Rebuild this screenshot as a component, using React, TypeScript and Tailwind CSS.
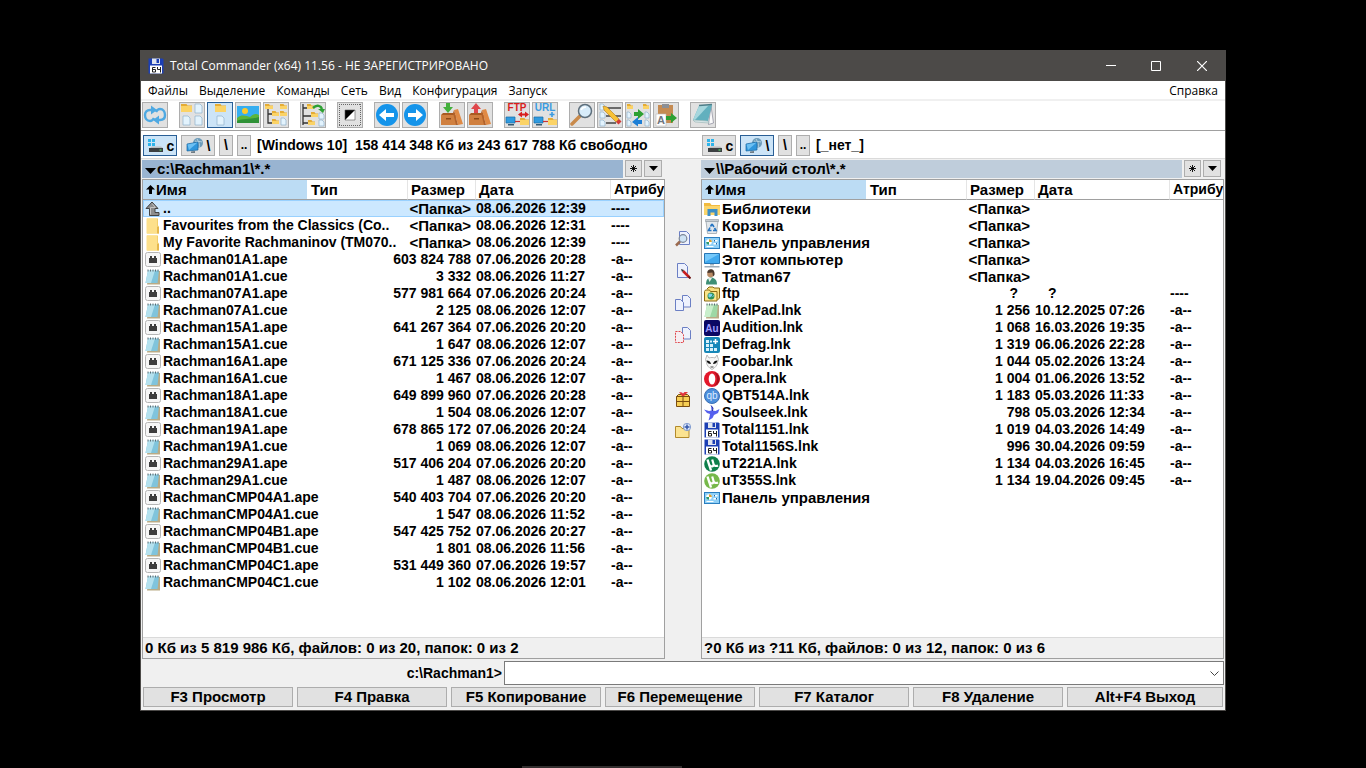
import { ReactNode } from "react";

type SvgProps = {
	children: ReactNode;
	box?: string;
	className?: string;
};

const Svg = ({ children, box = "0 0 16 16", className = "size-4" }: SvgProps) => (
	<svg viewBox={box} className={`block shrink-0 ${className}`} fill="none" aria-hidden="true">
		{children}
	</svg>
);

/* ---------- shared glyph pieces ---------- */

const Fold = ({ x, y, w = 9, h = 7 }: { x: number; y: number; w?: number; h?: number }) => (
	<g>
		<path d={`M${x} ${y}h${w / 2}l1 1.5h${w / 2 - 1}v${h - 1.5}h${-w}z`} fill="#e5ac35" />
		<path d={`M${x} ${y + 2}h${w}v${h - 2}h${-w}z`} fill="#fbd366" />
	</g>
);

const Sheet = ({ x, y, w = 7, h = 9 }: { x: number; y: number; w?: number; h?: number }) => (
	<path
		d={`M${x} ${y}h${w - 2}l2 2v${h - 2}h${-w}z`}
		fill="#e3f3fd"
		stroke="#8fb2cc"
		strokeWidth="0.7"
	/>
);

const Floppy = () => (
	<Svg>
		<path d="M0.500 0.500h14l1 1v14h-15z" fill="#1c3fb4" />
		<path d="M4 0.500h8v5.500h-8z" fill="#dfe4ee" />
		<path d="M8.500 1h2.500v4h-2.500z" fill="#1c3fb4" />
		<path d="M2 7.500h12v8h-12z" fill="#fff" />
		<path d="M7.500 9.500H4.500v4.500h3v-2.500h-3M9.500 9v2.500h3M12.500 9v5.500" stroke="#222" />
	</Svg>
);

const UpIcon = () => (
	<Svg>
		<path d="M7 1l6 6.500h-3v4h4v3H4.500V7.500H1z" fill="#8d8d8d" stroke="#444" strokeLinejoin="round" />
		<path d="M7 2.500L10.500 6.500H5.500v7" stroke="#c4c4c4" />
	</Svg>
);

const FolderIcon = () => (
	<Svg>
		<path d="M2 0.500h11v7l1 1v7H2z" fill="#f3cf6b" />
		<path d="M1.500 0.500h10.500v15H1.500z" fill="#fde08b" />
		<path d="M12 9h2v6.500h-2z" fill="#e5b74c" />
	</Svg>
);

const ApeIcon = () => (
	<Svg>
		<rect x="0.500" y="0.500" width="15" height="14" rx="2" fill="#f6f6f6" stroke="#b5b5b5" />
		<path d="M4 6h1V4h2v2h2V4h2v2h1v5H4z" fill="#3d3d3d" />
	</Svg>
);

const NoteIcon = ({ green = false }: { green?: boolean }) => (
	<Svg>
		<path d="M4 2h11v13.500H2z" fill="#b9ab86" />
		<path d="M3 1.500h11L12.500 14H0.500z" fill={green ? "#9ed8a6" : "#80c4dc"} />
		<path d="M3 1.500h7L6 14H0.500z" fill={green ? "#c9efcc" : "#b4e1ee"} />
		<path d="M3 0.500v2M5.500 0.500v2M8 0.500v2M10.500 0.500v2M13 0.500v2" stroke="#5a6d75" />
	</Svg>
);

const LibraryIcon = () => (
	<Svg>
		<path d="M0 2h6l1.500 2H16v10H0z" fill="#f2bb3f" />
		<path d="M0 5h16v9H0z" fill="#fbd56b" />
		<path d="M3.500 15V8h10v7h-3v-3.500h-4V15z" fill="#3c8fc7" />
	</Svg>
);

const BinIcon = () => (
	<Svg>
		<path d="M2 3h12l-1.500 12.500h-9z" fill="#e3e8ec" stroke="#9aa4ac" strokeWidth="0.800" />
		<path d="M1.500 1.500h13v2h-13z" fill="#c8ced3" stroke="#8d979f" strokeWidth="0.600" />
		<path d="M8 6l2 3M10.500 10L12 12.500H9M7.500 12.500h-3L6 9.500" stroke="#2474c2" strokeWidth="1.600" />
		<path d="M8 6L6.500 8.500" stroke="#2474c2" strokeWidth="1.600" />
	</Svg>
);

const PanelIcon = () => (
	<Svg>
		<rect x="0.500" y="2.500" width="15" height="11" fill="#8fd0f7" stroke="#2b7fc0" />
		<circle cx="5" cy="7" r="2.800" fill="#fff" />
		<path d="M5 7V4.200A2.800 2.800 0 0 1 7.800 7z" fill="#e0a02c" />
		<path d="M5 7H2.200A2.800 2.800 0 0 0 5 9.800z" fill="#2b9a6e" />
		<path d="M9.500 5h4v1.500h-4zM9.500 8h4v1.500h-4zM2.500 11h7v1h-7z" fill="#fff" />
		<path d="M10 5h1v1.500h-1zM12 8h1v1.500h-1z" fill="#1c67a8" />
	</Svg>
);

const PcIcon = () => (
	<Svg>
		<path d="M0.500 1.500h15v10H0.500z" fill="#41a9ee" stroke="#2676b5" />
		<path d="M1 2h14L1 10z" fill="#74c8fa" />
		<path d="M6 12h4v1.500H6z" fill="#a8b4bd" />
		<path d="M0.500 14h15v1.500H0.500z" fill="#9aabb8" />
	</Svg>
);

const UserIcon = () => (
	<Svg>
		<path d="M2 15.500c0-5 2-7 5-7s6 2 6 7z" fill="#3f8f76" />
		<path d="M4 9l1.500 4L8 9z" fill="#e8efe9" />
		<circle cx="6.500" cy="5" r="3.300" fill="#b98b66" />
		<path d="M3.500 4C3 1.500 5 0.300 7 0.300S11 2 10.500 6L9 7.500 8.500 3.500z" fill="#4a382c" />
	</Svg>
);

const FtpIcon = () => (
	<Svg>
		<path d="M3 3l2-2h4l1 1h5.500v10l-2 2" fill="#f9df7e" stroke="#8a6a12" />
		<path d="M0.500 5.500l1-1.500h4l1 1.500h6.500v9.500H0.500z" fill="#fbe58c" stroke="#8a6a12" />
		<circle cx="7" cy="10" r="3.500" fill="#2d8f5a" />
		<path d="M5 8l3 0.500-1 2-2 0.500zM8.500 10.500l1.500-1" fill="#7fd0f0" stroke="#7fd0f0" />
	</Svg>
);

const AuIcon = () => (
	<Svg>
		<rect width="16" height="16" rx="2" fill="#0b0863" />
		<text x="8" y="11.500" textAnchor="middle" fill="#9f9cff" fontSize="10" fontWeight="700" fontFamily="Liberation Sans, sans-serif">
			Au
		</text>
	</Svg>
);

const DefragIcon = () => (
	<Svg>
		<rect width="16" height="16" rx="2" fill="#1787b8" />
		<path
			d="M2 3h3v3H2zM2 7h3v3H2zM6 7h3v3H6zM2 11h3v3H2zM6 11h3v3H6zM10 11h3v3h-3zM6 3.500h2v2H6z"
			fill="#d8f1fb"
		/>
		<path d="M11.500 2v5M9 4.500h5" stroke="#fff" strokeWidth="1.500" />
	</Svg>
);

const FoobarIcon = () => (
	<Svg>
		<path
			d="M8 15.500C5 14 2.500 11 2.500 8.500L1.500 5.500 3 1 5 4C6.500 3.300 9.500 3.300 11 4L13 1 14.500 5.500 13.500 8.500C13.500 11 11 14 8 15.500z"
			fill="#f6f6f6"
			stroke="#aaa"
			strokeWidth="0.800"
		/>
		<path d="M2.500 6.500c2.500 0 4 1 4.500 3.500-2.500 0-4-1-4.500-3.500zM13.500 6.500c-2.500 0-4 1-4.500 3.500 2.500 0 4-1 4.500-3.500z" fill="#111" />
		<path d="M6.500 13h3" stroke="#444" />
	</Svg>
);

const OperaIcon = () => (
	<Svg>
		<circle cx="8" cy="8" r="8" fill="#e3182b" />
		<path d="M10 1c3 1 5.500 3.500 5.500 7S13 14 10 15c2-1.500 3-4 3-7s-1-5.500-3-7z" fill="#a7101d" />
		<ellipse cx="8" cy="8" rx="3.300" ry="5.500" fill="#fff" />
	</Svg>
);

const QbIcon = () => (
	<Svg>
		<circle cx="8" cy="8" r="7.500" fill="#4d8fdc" stroke="#3a6fb4" />
		<text x="8" y="11" textAnchor="middle" fill="#dcecff" fontSize="10" fontWeight="400" fontFamily="Liberation Sans, sans-serif">
			qb
		</text>
	</Svg>
);

const SoulIcon = () => (
	<Svg>
		<path
			d="M7 0.500l2 2.500-0.500 2.500 3 0.500 4-2-1.500 4-4 2-1.500 3-4 2.500 1-3.500 0.500-3L3 8 0 4.500l5 1.500 2.500-0.500z"
			fill="#5560ee"
		/>
		<path d="M7 0.500l2 2.500-0.500 3" stroke="#2a2fa0" />
	</Svg>
);

const TorrentIcon = ({ light = false }: { light?: boolean }) => (
	<Svg>
		<circle cx="8" cy="8" r="7.800" fill={light ? "#76b84a" : "#0f7f4b"} />
		<path d="M3.500 3.500L7 14.500" stroke="#fff" strokeWidth="2.400" />
		<path d="M5.500 9c1.500 2.500 4.500 1.500 4-1L8.200 3.500M9.500 8c0.500 2 2.500 2.500 4.500 1.500" stroke="#fff" strokeWidth="2.200" />
	</Svg>
);

/* ---------- toolbar ---------- */

const Tool24 = ({ children }: { children: ReactNode }) => (
	<Svg box="0 0 24 24" className="size-6">
		{children}
	</Svg>
);

const box = (arrow: ReactNode) => (
	<Tool24>
		<path d="M1 12l2-2h12v2z" fill="#a95a20" />
		<path d="M1 12h15v10H1z" fill="#d08040" />
		<path d="M14 7l4-1 5 15-5 1z" fill="#e08a45" />
		<path d="M14 7l-1 3 3 12h2z" fill="#b2622a" />
		<path d="M6 15h5v1.500H6z" fill="#8c4816" />
		{arrow}
	</Tool24>
);

const net = (
	<>
		<path d="M1 14h9v6H1z" fill="#2f9be0" stroke="#1b6ba5" strokeWidth="0.700" />
		<path d="M3 21h6v1.500H3z" fill="#355a73" />
		<path d="M10 18.500h5" stroke="#c33" strokeWidth="1.200" />
		<Fold x={15} y={15} w={9} h={7} />
	</>
);

const tools: { label: string; sep?: boolean; active?: boolean; icon: ReactNode }[] = [
	{
		label: "Перечитать",
		icon: (
			<Tool24>
				<path d="M11 15c-1 2-2 3-4 3-3 0-5-2.500-5-6 0-3 2-5 5-5h2" stroke="#4fa9e2" strokeWidth="2.400" />
				<path d="M13 9c1-2 2-3 4-3 3 0 5 2.500 5 6 0 3-2 5-5 5h-2" stroke="#4fa9e2" strokeWidth="2.400" />
				<path d="M8 2.500l6 4.500-6 4.500zM16 12.500l-6 4.500 6 4.500z" fill="#4fa9e2" />
			</Tool24>
		),
	},
	{
		label: "Краткий",
		sep: true,
		icon: (
			<Tool24>
				<Fold x={1} y={1} w={11} h={8} />
				<Sheet x={15} y={1} />
				<Sheet x={3} y={13} />
				<Sheet x={15} y={13} />
			</Tool24>
		),
	},
	{
		label: "Подробный",
		active: true,
		icon: (
			<Tool24>
				<Fold x={7} y={1} w={11} h={8} />
				<Sheet x={9} y={13} />
			</Tool24>
		),
	},
	{
		label: "Эскизы",
		icon: (
			<Tool24>
				<path d="M1 3h22v17H1z" fill="#36aef0" />
				<circle cx="9" cy="8" r="3" fill="#ffc928" />
				<path d="M1 15c5-4 9-2 13-1 3-3 6-4 9-2v8H1z" fill="#5bb53b" />
				<path d="M1 18c6-3 13-1 22-4v6H1z" fill="#2f9237" />
			</Tool24>
		),
	},
	{
		label: "Дерево",
		icon: (
			<Tool24>
				<path d="M4 6v14h5M4 11h5" stroke="#333" strokeWidth="1.300" />
				<Fold x={1} y={1} w={8} h={5} />
				<Fold x={8} y={8} w={7} h={5} />
				<Fold x={8} y={16} w={7} h={5} />
				<Fold x={16} y={1} w={7} h={5} />
				<Fold x={16} y={8} w={7} h={5} />
				<Sheet x={17} y={15} w={5} h={7} />
			</Tool24>
		),
	},
	{
		label: "Дерево каталогов",
		sep: true,
		icon: (
			<Tool24>
				<path d="M2 1v21M2 5h4M2 13h9M2 20h7" stroke="#333" strokeWidth="1.300" />
				<Fold x={6} y={1} w={7} h={5} />
				<Fold x={10} y={9} w={7} h={5} />
				<Fold x={7} y={17} w={7} h={5} />
				<path d="M12 5c4-4 8-2 9 1" stroke="#2da033" strokeWidth="2.500" />
				<path d="M17 6h7l-2 4z" fill="#2da033" />
				<Sheet x={18} y={10} w={5} h={6} />
				<Sheet x={18} y={17} w={5} h={6} />
			</Tool24>
		),
	},
	{
		label: "Инвертировать выделение",
		sep: true,
		icon: (
			<Tool24>
				<path d="M1 1.500h22M1 22.500h22M1.500 1v22M22.500 1v22" stroke="#666" strokeDasharray="1 1" />
				<path d="M7 7h10v10H7z" fill="#fff" />
				<path d="M7 7h10L7 17z" fill="#000" />
				<path d="M7 7h10v10H7z" stroke="#555" strokeWidth="0.600" />
			</Tool24>
		),
	},
	{
		label: "Назад",
		sep: true,
		icon: (
			<Tool24>
				<circle cx="12" cy="12" r="11" fill="#1594ea" />
				<path d="M4 12l7-6v4h8v4h-8v4z" fill="#fff" />
			</Tool24>
		),
	},
	{
		label: "Вперёд",
		icon: (
			<Tool24>
				<circle cx="12" cy="12" r="11" fill="#1594ea" />
				<path d="M20 12l-7-6v4H5v4h8v4z" fill="#fff" />
			</Tool24>
		),
	},
	{
		label: "Упаковать",
		sep: true,
		icon: box(<path d="M6 0h4v4h3l-5 6-5-6h3z" fill="#43b03c" />),
	},
	{
		label: "Распаковать",
		icon: box(<path d="M6 10h4V6h3L8 0 3 6h3z" fill="#e0474c" />),
	},
	{
		label: "FTP",
		sep: true,
		icon: (
			<Tool24>
				<text x="12" y="8" textAnchor="middle" fill="#d81e1e" fontSize="10" fontWeight="700" fontFamily="Liberation Sans, sans-serif">
					FTP
				</text>
				<path d="M13 11.500l4-3v2h3v-2l4 3-4 3v-2h-3v2z" fill="#d81e1e" />
				{net}
			</Tool24>
		),
	},
	{
		label: "URL",
		icon: (
			<Tool24>
				<text x="12" y="8" textAnchor="middle" fill="#3a9be0" fontSize="10" fontWeight="700" fontFamily="Liberation Sans, sans-serif">
					URL
				</text>
				<path d="M19 9v5M16.500 11.500h5" stroke="#3a9be0" strokeWidth="1.600" />
				{net}
			</Tool24>
		),
	},
	{
		label: "Поиск файлов",
		sep: true,
		icon: (
			<Tool24>
				<path d="M10 13l-8 8" stroke="#c98a4b" strokeWidth="3.500" strokeLinecap="round" />
				<circle cx="15" cy="8" r="6.500" fill="#d7ecfa" stroke="#5e6f7c" strokeWidth="1.500" />
				<path d="M11 7c1-2 3-3 5-3" stroke="#fff" strokeWidth="1.500" />
			</Tool24>
		),
	},
	{
		label: "Групповое переименование",
		icon: (
			<Tool24>
				<path d="M8 5h15M8 13h15M8 20h10" stroke="#444" strokeWidth="1.300" />
				<Sheet x={2} y={1} w={5} h={6} />
				<Sheet x={2} y={9} w={5} h={6} />
				<Sheet x={2} y={17} w={5} h={6} />
				<path d="M5 3l4 1 12 12-3 3L6 7z" fill="#f8c137" stroke="#b27a1a" strokeWidth="0.600" />
				<path d="M18 19l3-3 2.500 2.500-3 3z" fill="#d33a36" />
			</Tool24>
		),
	},
	{
		label: "Синхронизация",
		icon: (
			<Tool24>
				<Fold x={1} y={1} w={6} h={5} />
				<Fold x={17} y={1} w={6} h={5} />
				<Sheet x={1} y={9} w={4} h={6} />
				<Sheet x={1} y={17} w={4} h={6} />
				<Sheet x={19} y={9} w={4} h={6} />
				<Sheet x={19} y={17} w={4} h={6} />
				<path d="M8 9h4V6l6 5-6 5v-3H8z" fill="#2da033" />
				<path d="M16 17h-4v-3l-6 5 6 4.500V21h4z" fill="#1d7fd6" />
			</Tool24>
		),
	},
	{
		label: "Скопировать имена",
		icon: (
			<Tool24>
				<path d="M4 2h15v18H4z" fill="#c58b52" />
				<path d="M8 1h7v4H8z" fill="#8c8f94" />
				<path d="M2 11h10v12H2z" fill="#fff" stroke="#bbb" strokeWidth="0.600" />
				<text x="7" y="21" textAnchor="middle" fill="#6f7780" fontSize="11" fontWeight="700" fontFamily="Liberation Sans, sans-serif">
					A
				</text>
				<path d="M12 13h5v-3l6 5-6 5v-3h-5z" fill="#2da033" />
			</Tool24>
		),
	},
	{
		label: "Блокнот",
		sep: true,
		icon: (
			<Tool24>
				<path d="M20 3l2.500 17-5 1.500z" fill="#fafafa" stroke="#889" strokeWidth="0.700" />
				<path d="M8 3l13-1-4 16-15-1z" fill="#62b0be" />
				<path d="M8 3l10-1L4 17H2z" fill="#a6d6dd" />
				<path d="M2 17l15 1 1 2-14-1z" fill="#d8e6e8" stroke="#8aa" strokeWidth="0.500" />
				<path d="M8 2.500l13-1" stroke="#4c7d88" strokeWidth="1.500" />
			</Tool24>
		),
	},
];

const on = "border-[#2a5f96] bg-[#cce4f7]";
const off = "border-[#adadad] bg-[#e1e1e1]";

const Toolbar = () => (
	<div className="flex h-[29px] shrink-0 gap-0.5 pt-px pl-px">
		{tools.map((tool) => (
			<button
				key={tool.label}
				type="button"
				aria-label={tool.label}
				className={`flex size-[26px] items-center justify-center border ${tool.sep ? "ml-[9px]" : ""} ${tool.active ? on : off}`}
			>
				{tool.icon}
			</button>
		))}
	</div>
);

/* ---------- drive bar ---------- */

const DriveIcon = () => (
	<Svg box="0 0 18 16" className="h-4 w-[18px]">
		<path d="M2 1h3v3H2zM6 1h3v3H6zM2 5h3v3H2zM6 5h3v3H6z" fill="#2fb4ea" />
		<path d="M4 10l2-1.500h9l2 1.500z" fill="#b9bdc0" />
		<path d="M3 10h14v4H3z" fill="#3b3f42" />
		<path d="M13.500 12h2" stroke="#5ee06a" strokeWidth="1.200" />
	</Svg>
);

const NetIcon = () => (
	<Svg box="0 0 18 16" className="h-4 w-[18px]">
		<circle cx="12" cy="5" r="5" fill="#6d9cba" />
		<path d="M9 3c2 1 5 0 7 1M11 1c2 3 3 6 2 9" stroke="#b7d3e2" />
		<path d="M1 6l11-2v8L1 13z" fill="#2f96dc" stroke="#1a659f" strokeWidth="0.700" />
		<path d="M1.500 6.500l10-2L3 12z" fill="#6cc0f3" />
		<path d="M5 13.500l4-0.500v2H5z" fill="#6e7c86" />
	</Svg>
);

const Drives = ({ net: onNet, info }: { net: boolean; info: string }) => (
	<div className="flex h-[27px] min-w-0 items-start gap-1 pt-1 pl-px">
		<button type="button" className={`flex h-[21px] w-[34px] items-center justify-center gap-[3px] border ${onNet ? off : on}`}>
			<DriveIcon />c
		</button>
		<button type="button" className={`flex h-[21px] w-[34px] items-center justify-center gap-[3px] border ${onNet ? on : off}`}>
			<NetIcon />\
		</button>
		<button type="button" className={`h-[21px] w-3.5 border leading-[19px] ${off}`}>
			\
		</button>
		<button type="button" className={`h-[21px] w-3.5 border text-xs leading-[19px] ${off}`}>
			..
		</button>
		<span className="ml-0.5 leading-[21px] whitespace-pre">{info}</span>
	</div>
);

/* ---------- file panels ---------- */

type Row = { icon: ReactNode; name: string; size: string; date?: string; attr?: string };

const ape = (name: string, size: string, time: string): Row => ({
	icon: <ApeIcon />,
	name: `${name}.ape`,
	size,
	date: `07.06.2026 ${time}`,
	attr: "-a--",
});

const cue = (name: string, size: string, time: string): Row => ({
	icon: <NoteIcon />,
	name: `${name}.cue`,
	size,
	date: `08.06.2026 ${time}`,
	attr: "-a--",
});

const lnk = (icon: ReactNode, name: string, size: string, date: string): Row => ({
	icon,
	name: `${name}.lnk`,
	size,
	date,
	attr: "-a--",
});

const dir = "<Папка>";

const leftRows: Row[] = [
	{ icon: <UpIcon />, name: "..", size: dir, date: "08.06.2026 12:39", attr: "----" },
	{ icon: <FolderIcon />, name: "Favourites from the Classics (Co..", size: dir, date: "08.06.2026 12:31", attr: "----" },
	{ icon: <FolderIcon />, name: "My Favorite Rachmaninov (TM070..", size: dir, date: "08.06.2026 12:39", attr: "----" },
	ape("Rachman01A1", "603 824 788", "20:28"),
	cue("Rachman01A1", "3 332", "11:27"),
	ape("Rachman07A1", "577 981 664", "20:24"),
	cue("Rachman07A1", "2 125", "12:07"),
	ape("Rachman15A1", "641 267 364", "20:20"),
	cue("Rachman15A1", "1 647", "12:07"),
	ape("Rachman16A1", "671 125 336", "20:24"),
	cue("Rachman16A1", "1 467", "12:07"),
	ape("Rachman18A1", "649 899 960", "20:28"),
	cue("Rachman18A1", "1 504", "12:07"),
	ape("Rachman19A1", "678 865 172", "20:24"),
	cue("Rachman19A1", "1 069", "12:07"),
	ape("Rachman29A1", "517 406 204", "20:20"),
	cue("Rachman29A1", "1 487", "12:07"),
	ape("RachmanCMP04A1", "540 403 704", "20:20"),
	cue("RachmanCMP04A1", "1 547", "11:52"),
	ape("RachmanCMP04B1", "547 425 752", "20:27"),
	cue("RachmanCMP04B1", "1 801", "11:56"),
	ape("RachmanCMP04C1", "531 449 360", "19:57"),
	cue("RachmanCMP04C1", "1 102", "12:01"),
];

const rightRows: Row[] = [
	{ icon: <LibraryIcon />, name: "Библиотеки", size: dir },
	{ icon: <BinIcon />, name: "Корзина", size: dir },
	{ icon: <PanelIcon />, name: "Панель управления", size: dir },
	{ icon: <PcIcon />, name: "Этот компьютер", size: dir },
	{ icon: <UserIcon />, name: "Tatman67", size: dir },
	{ icon: <FtpIcon />, name: "ftp", size: "?", date: "?", attr: "----" },
	lnk(<NoteIcon green />, "AkelPad", "1 256", "10.12.2025 07:26"),
	lnk(<AuIcon />, "Audition", "1 068", "16.03.2026 19:35"),
	lnk(<DefragIcon />, "Defrag", "1 319", "06.06.2026 22:28"),
	lnk(<FoobarIcon />, "Foobar", "1 044", "05.02.2026 13:24"),
	lnk(<OperaIcon />, "Opera", "1 004", "01.06.2026 13:52"),
	lnk(<QbIcon />, "QBT514A", "1 183", "05.03.2026 11:33"),
	lnk(<SoulIcon />, "Soulseek", "798", "05.03.2026 12:34"),
	lnk(<Floppy />, "Total1151", "1 019", "04.03.2026 14:49"),
	lnk(<Floppy />, "Total1156S", "996", "30.04.2026 09:59"),
	lnk(<TorrentIcon />, "uT221A", "1 134", "04.03.2026 16:45"),
	lnk(<TorrentIcon light />, "uT355S", "1 134", "19.04.2026 09:45"),
	{ icon: <PanelIcon />, name: "Панель управления", size: "" },
];

type PanelProps = {
	path: string;
	barClass: string;
	rows: Row[];
	status: string;
	selected?: number;
};

const Panel = ({ path, barClass, rows, status, selected = -1 }: PanelProps) => (
	<section className="flex min-h-0 min-w-0 flex-col">
		<div className="flex h-[19px] shrink-0 gap-0.5 pr-[3px]">
			<div className={`flex h-[18px] flex-1 items-center gap-px pl-[3px] ${barClass}`}>
				<Svg box="0 0 11 6" className="mt-1 h-1.5 w-[11px]">
					<path d="M0 0h11L5.500 6z" fill="#000" />
				</Svg>
				<span className="text-[15px] leading-[18px]">{path}</span>
			</div>
			<button type="button" aria-label="Избранные каталоги" className={`flex h-[17px] w-[17px] items-center justify-center border ${off}`}>
				<Svg box="0 0 7 7" className="size-[7px]">
					<path d="M3.500 0v7M0 3.500h7M1 1l5 5M6 1L1 6" stroke="#000" strokeWidth="0.900" />
				</Svg>
			</button>
			<button type="button" aria-label="История" className={`flex h-[17px] w-[18px] items-center justify-center border ${off}`}>
				<Svg box="0 0 9 5" className="h-[5px] w-[9px]">
					<path d="M0 0h9L4.500 5z" fill="#000" />
				</Svg>
			</button>
		</div>
		<div className="flex min-h-0 flex-1 flex-col border border-[#a0a0a0]">
			<div className="min-h-0 flex-1 overflow-hidden bg-white">
				<table className="w-full table-fixed border-separate border-spacing-0 text-left">
					<colgroup>
						<col />
						<col className="w-[100px]" />
						<col className="w-[68px]" />
						<col className="w-[135px]" />
						<col className="w-[54px]" />
					</colgroup>
					<thead>
						<tr className="h-5 text-[15px] leading-[19px] whitespace-nowrap">
							<th className="border-b border-[#a0a0a0] bg-[#bcdcf4] p-0">
								<span className="flex items-center gap-px pl-[3px]">
									<Svg box="0 0 9 9" className="size-[9px]">
										<path d="M4.500 0L9 4.500H6V9H3V4.500H0z" fill="#000" />
									</Svg>
									Имя
								</span>
							</th>
							<th className="border-b border-[#a0a0a0] p-0 pl-1">Тип</th>
							<th className="border-b border-l border-b-[#a0a0a0] border-l-[#e5e5e5] p-0 pl-[3px]">Размер</th>
							<th className="border-b border-l border-b-[#a0a0a0] border-l-[#e5e5e5] p-0 pl-[3px]">Дата</th>
							<th className="border-b border-l border-b-[#a0a0a0] border-l-[#e5e5e5] p-0 pl-[3px] text-sm leading-[19px]">Атрибу</th>
						</tr>
					</thead>
					<tbody>
						{rows.map((row, i) => (
							<tr
								key={i}
								className={`h-[17px] leading-[17px] whitespace-nowrap ${
									i === selected ? "bg-[#cce8ff] outline-1 -outline-offset-1 outline-[#99d1ff]" : ""
								}`}
							>
								<td colSpan={2} className="p-0">
									<span className={`flex h-[17px] items-center gap-0.5 pl-0.5 ${row.attr ? "" : "text-[15px] leading-[17px]"}`}>
										{row.icon}
										{row.name}
									</span>
								</td>
								<td className="p-0">
									<span
										className={`flex h-[17px] justify-end ${row.size === "?" ? "pr-4" : "pr-1"} ${
											row.size === dir ? "text-[15px] leading-[17px]" : ""
										}`}
									>
										{row.size}
									</span>
								</td>
								<td className={row.date === "?" ? "p-0 pl-3.5" : "p-0 pl-px"}>{row.date}</td>
								<td className="p-0 pl-px">{row.attr}</td>
							</tr>
						))}
					</tbody>
				</table>
			</div>
			<div className="h-[21px] shrink-0 border-t border-[#dadada] pl-0.5 text-[15px] leading-[19px]">{status}</div>
		</div>
	</section>
);

/* ---------- middle button bar ---------- */

const page = "#6b7fc4";

const middle: { label: string; sep?: boolean; icon: ReactNode }[] = [
	{
		label: "Просмотр",
		icon: (
			<Svg>
				<path d="M4.500 0.500h7l3 3v10h-10z" fill="#eef2fd" stroke={page} />
				<path d="M5 10.500l-4 4" stroke="#9b6a4e" strokeWidth="2.500" />
				<circle cx="8" cy="7.500" r="3.800" fill="#cfe4f5" stroke="#7c8797" strokeWidth="1.200" />
			</Svg>
		),
	},
	{
		label: "Правка",
		icon: (
			<Svg>
				<path d="M2.500 0.500h7l3 3v11h-10z" fill="#eef2fd" stroke={page} />
				<path d="M8 8l6 6" stroke="#c81e1e" strokeWidth="2.500" />
				<path d="M6 6l3 1-2 2z" fill="#333" />
				<path d="M13.500 13.500l2 2" stroke="#6b1010" strokeWidth="2" />
			</Svg>
		),
	},
	{
		label: "Копирование",
		icon: (
			<Svg>
				<path d="M7.500 0.500h5l3 3v8.500h-8z" fill="#eef2fd" stroke={page} />
				<path d="M0.500 4.500h5l3 3v8h-8z" fill="#eef2fd" stroke={page} />
			</Svg>
		),
	},
	{
		label: "Перемещение",
		icon: (
			<Svg>
				<path d="M7.500 0.500h5l3 3v8.500h-8z" fill="#eef2fd" stroke={page} />
				<path d="M0.500 4.500h5l3 3v8h-8z" fill="#f6eef2" stroke="#e0474c" strokeDasharray="2 1" />
			</Svg>
		),
	},
	{
		label: "Упаковать",
		sep: true,
		icon: (
			<Svg>
				<path d="M1.500 5.500l2-2h9l2 2v10h-13z" fill="#f7cf55" stroke="#7a4d10" />
				<path d="M1.500 10.500h13M8 5v10.500M1.500 5.500h13" stroke="#7a4d10" />
				<path d="M4 1l3 0.500 1 1L9.500 1 13 1 9 5H7z" fill="#e0353c" />
			</Svg>
		),
	},
	{
		label: "Создать каталог",
		icon: (
			<Svg>
				<path d="M0.500 3.500h5l1.500 2h7v9H0.500z" fill="#fbe391" stroke="#b28a2b" />
				<circle cx="12" cy="4" r="3.700" fill="#dfe9fb" stroke="#5a7cc0" strokeWidth="0.700" />
				<path d="M12 1.500v5M9.500 4h5" stroke="#3457a8" strokeWidth="1.500" />
			</Svg>
		),
	},
];

const keys = ["F3 Просмотр", "F4 Правка", "F5 Копирование", "F6 Перемещение", "F7 Каталог", "F8 Удаление"];
const menu = ["Файлы", "Выделение", "Команды", "Сеть", "Вид", "Конфигурация", "Запуск"];

export default function App() {
	return (
		<div className="flex h-screen flex-col bg-black px-[140px] pt-[50px] font-['Liberation_Sans',Arial,sans-serif] text-sm font-bold text-black">
			<main className="flex min-h-0 flex-1 flex-col border border-[#4c4a48] bg-[#f0f0f0]">
				<header className="flex h-[30px] shrink-0 items-center bg-[#4c4a48] pl-[7px] font-['Open_Sans','Noto_Sans',sans-serif] text-xs font-normal text-white">
					<Floppy />
					<h1 className="ml-1.5 flex-1">Total Commander (x64) 11.56 - НЕ ЗАРЕГИСТРИРОВАНО</h1>
					<button type="button" aria-label="Свернуть" className="flex h-full w-11 items-center justify-center">
						<Svg box="0 0 10 10" className="size-2.5">
							<path d="M0 4.500h10" stroke="#fff" />
						</Svg>
					</button>
					<button type="button" aria-label="Развернуть" className="flex h-full w-[46px] items-center justify-center">
						<Svg box="0 0 10 10" className="size-2.5">
							<path d="M0.500 0.500h9v9h-9z" stroke="#fff" />
						</Svg>
					</button>
					<button type="button" aria-label="Закрыть" className="flex h-full w-[46px] items-center justify-center">
						<Svg box="0 0 10 10" className="size-2.5">
							<path d="M0 0l10 10M10 0L0 10" stroke="#fff" strokeWidth="1.200" />
						</Svg>
					</button>
				</header>

				<nav className="flex h-5 shrink-0 items-center gap-[11px] border-b-2 border-[#f0f0f0] bg-white px-[7px] pt-0.5 font-['Open_Sans','Noto_Sans',sans-serif] text-xs font-normal">
					{menu.map((item) => (
						<button key={item} type="button">
							{item}
						</button>
					))}
					<button type="button" className="ml-auto">
						Справка
					</button>
				</nav>

				<div className="shrink-0 bg-white">
					<Toolbar />
					<div className="grid grid-cols-[1fr_36px_1fr] border-t border-b border-t-[#a0a0a0] border-b-[#dadada] px-px">
						<Drives net={false} info="[Windows 10]  158 414 348 Кб из 243 617 788 Кб свободно" />
						<div />
						<Drives net info="[_нет_]" />
					</div>
				</div>

				<div className="grid min-h-0 flex-1 grid-cols-[1fr_36px_1fr] grid-rows-[minmax(0,1fr)] px-px pt-px">
					<Panel
						path="c:\Rachman1\*.*"
						barClass="bg-[#99b4d1]"
						rows={leftRows}
						status="0 Кб из 5 819 986 Кб, файлов: 0 из 20, папок: 0 из 2"
						selected={0}
					/>
					<div className="flex flex-col items-center gap-4 pt-[71px]">
						{middle.map((item) => (
							<button key={item.label} type="button" aria-label={item.label} className={item.sep ? "mt-8" : ""}>
								{item.icon}
							</button>
						))}
					</div>
					<Panel
						path="\\Рабочий стол\*.*"
						barClass="bg-[#bfcddb]"
						rows={rightRows}
						status="?0 Кб из ?11 Кб, файлов: 0 из 12, папок: 0 из 6"
					/>
				</div>

				<div className="flex shrink-0 gap-0.5 px-px pt-0.5">
					<label htmlFor="cmd" className="w-[360px] text-right leading-6">
						c:\Rachman1&gt;
					</label>
					<div className="flex h-6 flex-1 items-center border border-[#7a7a7a] bg-white pr-1">
						<input id="cmd" type="text" className="h-full min-w-0 flex-1 px-1 outline-none" />
						<button type="button" aria-label="История команд">
							<Svg box="0 0 9 5" className="h-[5px] w-[9px]">
								<path d="M0.500 0.500l4 4 4-4" stroke="#444" />
							</Svg>
						</button>
					</div>
				</div>

				<div className="flex shrink-0 gap-1 pt-0.5 pr-0.5 pb-[3px] pl-0.5 text-[15px]">
					{keys.map((key) => (
						<button key={key} type="button" className={`h-5 flex-[150_1_0%] border leading-[18px] ${off}`}>
							{key}
						</button>
					))}
					<button type="button" className={`h-5 flex-[156_1_0%] border leading-[18px] ${off}`}>
						Alt+F4 Выход
					</button>
				</div>
			</main>
			<footer className="flex h-[57px] shrink-0 items-end justify-center">
				<div className="mr-[162px] h-0.5 w-40 bg-[#332f2f]" />
			</footer>
		</div>
	);
}
